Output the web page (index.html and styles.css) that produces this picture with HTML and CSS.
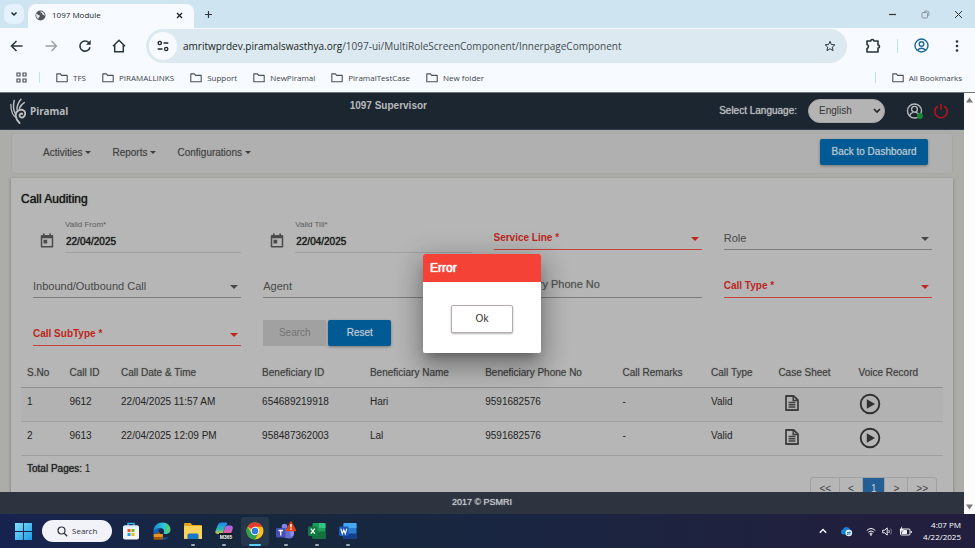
FILE: index.html
```html
<!DOCTYPE html>
<html lang="en">
<head>
<meta charset="utf-8">
<title>1097 Module</title>
<link rel="stylesheet" href="styles.css">
</head>
<body>
<svg class="defs" aria-hidden="true">
  <symbol id="folder" viewBox="0 0 12 10"><path d="M.8 1.8v6.9h10.4V2.4H5.6L4.4.9H.8z" fill="none" stroke="#4a5258" stroke-width="1.1" stroke-linejoin="round"/></symbol>
  <symbol id="calendar" viewBox="0 0 14 15"><path d="M1.5 3h11v10.7h-11z" fill="none" stroke="#4b4b4b" stroke-width="1.5" stroke-linejoin="round"/><path d="M1 2.3h12v2.9H1zM3 .4h1.6v2.4H3zM9.4.4H11v2.4H9.4zM3.5 6.8h3.7v3.7H3.5z" fill="#4b4b4b"/></symbol>
  <symbol id="sheet" viewBox="0 0 14 16"><path d="M1 1h7.6L13 5.2V15H1z" fill="none" stroke="#3f3f3f" stroke-width="1.8" stroke-linejoin="round"/><path d="M8.2 1v4.6H13M3.6 7.6h6.8M3.6 9.8h6.8M3.6 12h6.8" fill="none" stroke="#3f3f3f" stroke-width="1.5"/></symbol>
  <symbol id="play" viewBox="0 0 22 22"><circle cx="11" cy="11" r="9.3" fill="none" stroke="#303030" stroke-width="1.9"/><path d="M7.8 6.3v9.4l8.2-4.7z" fill="#303030"/></symbol>
</svg>

<header class="browser">
  <div class="tabs">
    <button class="tab-menu" aria-label="Search tabs"><svg width="8" height="6" viewBox="0 0 8 6"><path d="M1.5 1.5 4 4l2.5-2.5" fill="none" stroke="#1f2a30" stroke-width="1.5"/></svg></button>
    <div class="tab">
      <svg width="11" height="11" viewBox="0 0 11 11"><circle cx="5.500" cy="5.500" r="5" fill="#4f565b"/><path d="M1.200 3.500c1.500.300 1.700 1.600 3 1.800 1.200.200.800 1.400 0 1.600-.900.400-.400 1.600-1 2C1.400 8 .800 5.500 1.200 3.500zM5.500 1.300c-.300 1 .200 1.500 1.200 1.500.700.700 0 1.500 1.300 1.900 1.300.100 1 1.200 1.700 1.200C9.900 3.500 8.100 1.500 5.500 1.300z" fill="#e6eaed"/></svg>
      <span class="tab-title">1097 Module</span>
      <button class="bare" aria-label="Close tab"><svg width="7" height="7" viewBox="0 0 7 7"><path d="m1 1 5 5m0-5L1 6" stroke="#222" stroke-width="1.3"/></svg></button>
    </div>
    <button class="bare new-tab" aria-label="New tab"><svg width="9" height="9" viewBox="0 0 9 9"><path d="M4.500 1v7M1 4.500h7" stroke="#30383d" stroke-width="1.200"/></svg></button>
    <div class="window-buttons">
      <button class="bare" aria-label="Minimize"><svg width="9" height="9" viewBox="0 0 9 9"><path d="M1 4.500h7" stroke="#333" stroke-width="1.200"/></svg></button>
      <button class="bare" aria-label="Restore"><svg width="9" height="9" viewBox="0 0 9 9"><rect x="1" y="2.500" width="5.500" height="5.500" rx="1" fill="none" stroke="#8b979e"/><path d="M3 1.200h3.500q1.400 0 1.400 1.400V6" fill="none" stroke="#8b979e"/></svg></button>
      <button class="bare" aria-label="Close"><svg width="9" height="9" viewBox="0 0 9 9"><path d="m1 1 7 7m0-7L1 8" stroke="#333"/></svg></button>
    </div>
  </div>

  <div class="toolbar">
    <div class="nav-buttons">
      <button class="bare" aria-label="Back"><svg width="14" height="14" viewBox="0 0 14 14"><path d="M12.500 7h-11M6.500 2l-5 5 5 5" fill="none" stroke="#2a363d" stroke-width="1.600"/></svg></button>
      <button class="bare" aria-label="Forward"><svg width="14" height="14" viewBox="0 0 14 14"><path d="M1.500 7h11M7.500 2l5 5-5 5" fill="none" stroke="#9a9fa3" stroke-width="1.400"/></svg></button>
      <button class="bare" aria-label="Reload"><svg width="14" height="14" viewBox="0 0 14 14"><path d="M12 8.200A5.100 5.100 0 1 1 10.700 3.500L12 4.800" fill="none" stroke="#2a363d" stroke-width="1.600"/><path d="M12.700 1v4.700H8z" fill="#2a363d"/></svg></button>
      <button class="bare" aria-label="Home"><svg width="14" height="14" viewBox="0 0 14 14"><path d="M1 7.300 7 1.300l6 6M2.700 6v6.700h8.600V6" fill="none" stroke="#2a363d" stroke-width="1.500"/></svg></button>
    </div>
    <div class="omnibox">
      <button class="site-info" aria-label="Site information"><svg width="12" height="12" viewBox="0 0 12 12"><g fill="none" stroke="#22292e" stroke-width="1.400"><circle cx="2.800" cy="3" r="1.600"/><path d="M6.500 3h4.800M.700 9h4.800"/><circle cx="9.200" cy="9" r="1.600"/></g></svg></button>
      <div class="url" role="textbox" aria-label="Address"><b>amritwprdev.piramalswasthya.org</b>/1097-ui/MultiRoleScreenComponent/InnerpageComponent</div>
      <button class="bare" aria-label="Bookmark this page"><svg width="12" height="12" viewBox="0 0 12 12"><path d="m6 1.300 1.400 3.200 3.500.300L8.300 7.100l.800 3.500L6 8.800l-3.100 1.800.800-3.500L1.100 4.800l3.500-.300z" fill="none" stroke="#30383d"/></svg></button>
    </div>
    <button class="bare ext" aria-label="Extensions"><svg width="16" height="16" viewBox="0 0 16 16"><path d="M2 3h3.800a1.500 1.500 0 0 1 3 0h4.200v4a1.500 1.500 0 0 1 0 3v4H2v-3.500a2.100 2.100 0 0 0 0-4z" fill="none" stroke="#26343c" stroke-width="1.600" stroke-linejoin="round"/></svg></button>
    <span class="rule"></span>
    <button class="bare profile" aria-label="Profile"><svg width="15" height="15" viewBox="0 0 15 15"><g fill="none" stroke="#1f6a94" stroke-width="1.400"><circle cx="7.500" cy="7.500" r="6.500"/><circle cx="7.500" cy="6" r="2.300"/><path d="M3.300 12.200q4.200-3.800 8.400 0"/></g></svg></button>
    <button class="bare more" aria-label="Menu"><svg width="4" height="14" viewBox="0 0 4 14"><g fill="#26343c"><circle cx="2" cy="2.500" r="1.300"/><circle cx="2" cy="7" r="1.300"/><circle cx="2" cy="11.500" r="1.300"/></g></svg></button>
  </div>

  <nav class="bookmarks">
    <button class="bare" aria-label="Apps"><svg width="11" height="11" viewBox="0 0 11 11"><g fill="none" stroke="#4a5258" stroke-width="1.200"><path d="M1 1h3v3H1zM7 1h3v3H7zM1 7h3v3H1zM7 7h3v3H7z"/></g></svg></button>
    <span class="rule"></span>
    <a href="#"><svg width="12" height="10"><use href="#folder"/></svg>TFS</a>
    <a href="#"><svg width="12" height="10"><use href="#folder"/></svg>PIRAMALLINKS</a>
    <a href="#"><svg width="12" height="10"><use href="#folder"/></svg>Support</a>
    <a href="#"><svg width="12" height="10"><use href="#folder"/></svg>NewPiramal</a>
    <a href="#"><svg width="12" height="10"><use href="#folder"/></svg>PiramalTestCase</a>
    <a href="#"><svg width="12" height="10"><use href="#folder"/></svg>New folder</a>
    <span class="rule push"></span>
    <a href="#"><svg width="12" height="10"><use href="#folder"/></svg>All Bookmarks</a>
  </nav>
</header>

<div class="viewport">
  <div class="app">
    <header class="app-bar">
      <div class="brand">
        <svg width="16" height="26" viewBox="0 0 16 26"><g fill="none" stroke="#bcbec0" stroke-linecap="round"><path d="M9.500 25C5 20.500 4 14.500 9 12.200c3.500-1.400 6.200.500 6.200 3.200 0 3-3 5.300-5 3.500-1.600-1.600.500-4 2-3" stroke-width="1.900"/><path d="M6.500 20C2 17.500.900 13 .800 6.500" stroke-width="1.300"/><path d="M5.500 16C3.200 12 3 7.500 4.200 2.500M7 11.500C7 8 8.500 4 11 1.200M9.500 10.300c1-2.600 2.500-4.400 4.800-5.700" stroke-width="1.500"/></g></svg>
        <span>Piramal</span>
      </div>
      <h1>1097 Supervisor</h1>
      <label for="lang">Select Language:</label>
      <select id="lang" class="lang"><option>English</option></select>
      <button class="bare user" aria-label="User profile"><svg width="18" height="17" viewBox="0 0 18 17"><g fill="none" stroke="#b5b8ba" stroke-width="1.400"><circle cx="8.500" cy="8" r="7"/><circle cx="8.500" cy="6.300" r="2.900"/><path d="M3.500 13q1-3 3.500-3.600M13.500 13q-1-3-3.500-3.600"/></g><circle cx="14" cy="13" r="2.900" fill="#17872f"/></svg></button>
      <button class="bare" aria-label="Log out"><svg width="14" height="16" viewBox="0 0 14 16"><path d="M3.800 3.200a6.200 6.200 0 1 0 6.400 0M7 .800v6" fill="none" stroke="#b3151b" stroke-width="1.600"/></svg></button>
    </header>

    <main>
      <nav class="menu">
        <button class="drop">Activities</button>
        <button class="drop">Reports</button>
        <button class="drop">Configurations</button>
        <button class="primary back">Back to Dashboard</button>
      </nav>

      <section class="card">
        <h2>Call Auditing</h2>
        <form class="filters">
          <div class="date">
            <svg width="14" height="15"><use href="#calendar"/></svg>
            <div><label for="from">Valid From*</label><input id="from" value="22/04/2025"></div>
          </div>
          <div class="date">
            <svg width="14" height="15"><use href="#calendar"/></svg>
            <div><label for="till">Valid Till*</label><input id="till" value="22/04/2025"></div>
          </div>
          <div class="field required"><select aria-label="Service Line"><option>Service Line *</option></select></div>
          <div class="field"><select aria-label="Role"><option>Role</option></select></div>
          <div class="field"><select aria-label="Inbound/Outbound Call"><option>Inbound/Outbound Call</option></select></div>
          <div class="field"><select aria-label="Agent"><option>Agent</option></select></div>
          <div class="text"><input aria-label="Beneficiary Phone No" placeholder="Beneficiary Phone No"></div>
          <div class="field required"><select aria-label="Call Type"><option>Call Type *</option></select></div>
          <div class="field required"><select aria-label="Call SubType"><option>Call SubType *</option></select></div>
          <div class="actions">
            <button type="button" class="muted" disabled>Search</button>
            <button type="button" class="primary">Reset</button>
          </div>
        </form>

        <table>
          <colgroup><col class="c1"><col class="c2"><col class="c3"><col class="c4"><col class="c5"><col class="c6"><col class="c7"><col class="c8"><col class="c9"><col></colgroup>
          <thead>
            <tr><th>S.No</th><th>Call ID</th><th>Call Date &amp; Time</th><th>Beneficiary ID</th><th>Beneficiary Name</th><th>Beneficiary Phone No</th><th>Call Remarks</th><th>Call Type</th><th>Case Sheet</th><th>Voice Record</th></tr>
          </thead>
          <tbody>
            <tr><td>1</td><td>9612</td><td>22/04/2025 11:57 AM</td><td>654689219918</td><td>Hari</td><td>9591682576</td><td>-</td><td>Valid</td>
              <td><button class="bare sheet" aria-label="Case sheet"><svg width="14" height="16"><use href="#sheet"/></svg></button></td>
              <td><button class="bare" aria-label="Play"><svg width="22" height="22"><use href="#play"/></svg></button></td></tr>
            <tr><td>2</td><td>9613</td><td>22/04/2025 12:09 PM</td><td>958487362003</td><td>Lal</td><td>9591682576</td><td>-</td><td>Valid</td>
              <td><button class="bare sheet" aria-label="Case sheet"><svg width="14" height="16"><use href="#sheet"/></svg></button></td>
              <td><button class="bare" aria-label="Play"><svg width="22" height="22"><use href="#play"/></svg></button></td></tr>
          </tbody>
        </table>
        <p class="total"><span>Total Pages:</span> 1</p>
        <nav class="pager" aria-label="Pages">
          <a href="#">&lt;&lt;</a><a href="#">&lt;</a><a href="#" class="current">1</a><a href="#">&gt;</a><a href="#">&gt;&gt;</a>
        </nav>
      </section>
    </main>
    <footer class="app-footer">2017 © PSMRI</footer>

    <div class="modal-layer">
      <div class="modal" role="alertdialog" aria-labelledby="modal-title">
        <h3 id="modal-title">Error</h3>
        <div class="modal-body"><button>Ok</button></div>
      </div>
    </div>
  </div>
  <div class="scrollbar" aria-hidden="true">
    <svg width="7" height="6" viewBox="0 0 7 6"><path d="M3.500.500 7 5.500H0z" fill="#7c7c7c"/></svg>
    <svg width="7" height="6" viewBox="0 0 7 6"><path d="M3.500 5.500 7 .500H0z" fill="#7c7c7c"/></svg>
  </div>
</div>

<footer class="taskbar">
  <div class="apps">
    <button class="bare start" aria-label="Start"><svg width="17" height="17" viewBox="0 0 17 17"><defs><linearGradient id="win" x2="1" y2="1"><stop stop-color="#7fe0fb"/><stop offset="1" stop-color="#1c9ae6"/></linearGradient></defs><path d="M0 0h8v8H0zM9 0h8v8H9zM0 9h8v8H0zM9 9h8v8H9z" fill="url(#win)"/></svg></button>
    <button class="search"><svg width="11" height="11" viewBox="0 0 11 11"><circle cx="4.500" cy="4.500" r="3.500" fill="none" stroke="#2b3038" stroke-width="1.200"/><path d="m7.200 7.200 3 3" stroke="#2b3038" stroke-width="1.300"/></svg>Search</button>
    <button class="app-icon" aria-label="Store"><svg width="18" height="18" viewBox="0 0 18 18"><path d="M6 4V1.500h6V4" fill="none" stroke="#35b4ec" stroke-width="1.400"/><rect x="1" y="3.500" width="16" height="14" rx="2" fill="#f2f5f7"/><path d="M1 5.500q0-2 2-2h12q2 0 2 2z" fill="#d9eef8"/><path d="M5.500 7h3v3h-3z" fill="#f04e23"/><path d="M9.500 7h3v3h-3z" fill="#74b82a"/><path d="M5.500 11h3v3h-3z" fill="#1c9ee8"/><path d="M9.500 11h3v3h-3z" fill="#f7b617"/></svg></button>
    <button class="app-icon" aria-label="Edge"><svg width="18" height="18" viewBox="0 0 18 18"><defs><linearGradient id="edge" x2="1"><stop stop-color="#1687d8"/><stop offset=".6" stop-color="#2fc4d8"/><stop offset="1" stop-color="#5bd15a"/></linearGradient></defs><path d="M.500 9.500C.500 3.500 5 .500 9.500.500c5 0 8 3.500 8 7 0 3-2.300 4.500-4.700 4.500-1.800 0-2.500-.700-2-1.600 1-2-.500-4.200-3.300-4.200C4 6.200 1.300 8 .500 10.500z" fill="url(#edge)"/><path d="M.500 10C1.500 7 4.500 6 7 6.500c-2 1.500-2 5 .500 7.500 2.500 2.300 6 2.200 8.500.500-2 3-6 3.500-9 2.500C3 16 .500 13.500.500 10z" fill="#1262b8"/><path d="M3.500 10.500h3.600V12h2.700v5.800H.700V12h2.800z" fill="#9b5710"/><path d="M.700 12h9.100v3H.700z" fill="#e79327"/></svg></button>
    <button class="app-icon running" aria-label="File Explorer"><svg width="18" height="18" viewBox="0 0 18 18"><path d="M0 2q0-1 1-1h5.500l2 2H17q1 0 1 1v12q0 1-1 1H1q-1 0-1-1z" fill="#e5a51b"/><path d="M0 5q0-1 1-1h16q1 0 1 1v11q0 1-1 1H1q-1 0-1-1z" fill="#fbd35b"/><path d="M3.500 17v-4q0-1.500 1.500-1.500h8q1.500 0 1.500 1.500v4z" fill="#1878c9"/></svg></button>
    <button class="app-icon running" aria-label="Microsoft 365"><svg width="18" height="18" viewBox="0 0 18 18"><defs><linearGradient id="co1" x1="0" y1="0" x2="0" y2="1"><stop stop-color="#1e87ec"/><stop offset=".6" stop-color="#27b9b2"/><stop offset="1" stop-color="#e9c62a"/></linearGradient><linearGradient id="co2" x1="0" y1="0" x2="0" y2="1"><stop stop-color="#a267ee"/><stop offset="1" stop-color="#ee5a83"/></linearGradient></defs><path d="M6 .500h5q1.500 0 1.200 1.500L10 5 7.500 12H3Q-.500 12 .500 9L3 2.500Q3.700.500 6 .500z" fill="url(#co1)"/><path d="M12 3.500h3.500Q18.500 3.500 17.700 7l-1.600 4.500Q15.500 13 13 13H7.500L10 5z" fill="url(#co2)"/><path d="M4 11h14v6.500H4z" fill="#101820"/><text x="11" y="16.500" text-anchor="middle" class="tiny-mark">M365</text></svg></button>
    <button class="app-icon running active" aria-label="Chrome"><svg width="18" height="18" viewBox="0 0 18 18"><circle cx="9" cy="9" r="8.500" fill="#fbc116"/><path d="M9 9 1.600 4.800A8.500 8.500 0 0 1 16.400 4.800H9z" fill="#e33b2e"/><path d="M1.600 4.800A8.500 8.500 0 0 0 9 17.500L12.700 11 9 13 5.300 11z" fill="#29a352"/><circle cx="9" cy="9" r="4.200" fill="#fff"/><circle cx="9" cy="9" r="3.300" fill="#2f7de9"/></svg></button>
    <button class="app-icon running" aria-label="Teams"><svg width="20" height="20" viewBox="0 0 20 20"><circle cx="8.500" cy="5.500" r="2.800" fill="#7b83eb"/><path d="M6 8h11.500v5.500q0 4-4 4-5 0-7.500-3z" fill="#6670d4"/><path d="M13.500 8H18v4.500q0 3-3 3z" fill="#8b92ee"/><rect y="7" width="9.500" height="9.500" rx="1" fill="#4550b5"/><path d="M2.500 9.500H7M4.750 9.500v5" stroke="#fff" stroke-width="1.300"/><path d="M15 1 19.500 9.500h-9z" fill="#e2410e" stroke="#e2410e" stroke-width="1.500" stroke-linejoin="round"/><path d="M15 3v3.500M15 7.500V9" stroke="#fff" stroke-width="1.400"/></svg></button>
    <button class="app-icon running" aria-label="Excel"><svg width="18" height="18" viewBox="0 0 18 18"><rect x="4.500" y="1" width="13" height="16" rx="1" fill="#1f9c5c"/><path d="M11 1h5.500q1 0 1 1v4H11z" fill="#32c481"/><path d="M4.500 9.500h13V16q0 1-1 1h-11q-1 0-1-1z" fill="#15703f"/><rect y="4.500" width="9.500" height="9.500" rx="1" fill="#0f7a41"/><path d="m2.800 6.700 4 5m0-5-4 5" stroke="#fff" stroke-width="1.300"/></svg></button>
    <button class="app-icon running" aria-label="Word"><svg width="18" height="18" viewBox="0 0 18 18"><rect x="4.500" y="1" width="13" height="16" rx="1" fill="#2b7cd3"/><path d="M4.500 6V2q0-1 1-1h11q1 0 1 1v4z" fill="#46a8f0"/><path d="M4.500 11.500h13V16q0 1-1 1h-11q-1 0-1-1z" fill="#143f8f"/><rect y="4.500" width="9.500" height="9.500" rx="1" fill="#1d57b7"/><path d="m1.800 6.700 1.500 5 1.500-4 1.500 4 1.500-5" fill="none" stroke="#fff" stroke-width="1.100"/></svg></button>
  </div>
  <div class="tray">
    <svg class="chevron" width="8" height="6" viewBox="0 0 8 6"><path d="m.800 4.800 3.200-3.300 3.200 3.300" fill="none" stroke="#fff" stroke-width="1.300"/></svg>
    <svg class="cloud" width="13" height="11" viewBox="0 0 13 11"><path d="M3 8.500a2.700 2.700 0 0 1 0-5.200 3.800 3.800 0 0 1 7 .200 2.600 2.600 0 0 1 0 5z" fill="#1583dc"/><circle cx="8.800" cy="7" r="3.300" fill="#e9f4fc"/><path d="M7 6.500h3.500L9.600 5.400M10.500 8H7l.900 1" fill="none" stroke="#1470bd" stroke-width=".9"/></svg>
    <svg width="10" height="9" viewBox="0 0 10 9"><g fill="none" stroke="#f2f2f5"><path d="M.700 3.500q4.300-4 8.600 0M2.200 5.200q2.800-2.500 5.600 0M3.600 6.700q1.400-1.200 2.800 0"/></g><circle cx="5" cy="7.800" r=".9" fill="#fff"/></svg>
    <svg width="11" height="9" viewBox="0 0 11 9"><path d="M.700 3.200h1.800L5.200.900v7.200L2.500 5.800H.700z" fill="none" stroke="#f2f2f5"/><path d="M6.800 3q1 1.500 0 3" fill="none" stroke="#f2f2f5"/><path d="M8.600 1.500q2 3 0 6" fill="none" stroke="#777590"/></svg>
    <svg width="13" height="11" viewBox="0 0 13 11"><rect x="1.500" y="3" width="9.500" height="6" rx="1" fill="none" stroke="#f2f2f5"/><path d="M12.300 5v2M4.500 4.500h3v3H3z" stroke="#f2f2f5" fill="#f2f2f5"/><path d="M3.200 0 .500 4.200h2L1.800 7 4.800 3H2.700z" fill="#fff"/></svg>
    <div class="clock"><div>4:07 PM</div><div>4/22/2025</div></div>
  </div>
</footer>
</body>
</html>
```
FILE: styles.css
```css
* { box-sizing: border-box; }
body {
  margin: 0;
  height: 100vh;
  display: flex;
  flex-direction: column;
  overflow: hidden;
  font: 10px/14px "Liberation Sans", Arial, sans-serif;
  background: #b6b6b6;
}
button, input, select { font: inherit; color: inherit; margin: 0; }
svg { display: block; flex: none; }
h1, h2, h3, p { margin: 0; }
a { color: inherit; text-decoration: none; }
.defs { position: absolute; width: 0; height: 0; }
.bare { border: 0; padding: 0; background: none; display: block; }

/* Browser frame */
.browser { flex: none; background: #f7faff; font-family: "Open Sans", "Noto Sans", sans-serif; color: #3c4348; border-bottom: 1px solid #6f767c; }
.tabs { display: flex; align-items: center; height: 28px; background: #cfe4f1; padding: 0 12px 0 4px; }
.tab-menu { width: 20px; height: 20px; border: 0; border-radius: 7px; background: #e3f2fd; display: grid; place-items: center; padding: 0; }
.tab { align-self: flex-end; display: flex; align-items: center; gap: 6px; width: 166px; height: 24px; margin-left: 4px; padding: 0 11px 2px 7px; border-radius: 8px 8px 0 0; background: #f7faff; }
.tab-title { flex: 1; font-size: 8px; color: #20282d; }
.new-tab { margin-left: 10px; }
.window-buttons { display: flex; gap: 24px; margin-left: auto; }
.toolbar { display: flex; align-items: center; height: 35px; padding: 0 16px 0 10px; background: #f7faff; border-top-right-radius: 8px; }
.nav-buttons { display: flex; gap: 20px; margin-right: 20px; }
.omnibox { flex: 1; display: flex; align-items: center; height: 34px; border-radius: 17px; background: #dde9f0; padding: 0 11px 0 3px; }
.site-info { width: 28px; height: 28px; border: 0; border-radius: 14px; background: #f7faff; display: grid; place-items: center; padding: 0; }
.url { flex: 1; margin-left: 6px; font-size: 10px; white-space: nowrap; color: #434b50; }
.url b { font-weight: 400; color: #161d21; }
.ext { margin-left: 18px; }
.rule { width: 1px; height: 14px; background: #b9e3f8; }
.toolbar .rule { margin: 0 16px; }
.more { margin-left: 26px; }
.bookmarks { display: flex; align-items: center; height: 29px; padding: 0 13px 0 16px; font-size: 8px; background: #f7faff; }
.bookmarks a { display: flex; align-items: center; gap: 5px; margin-left: 16px; white-space: nowrap; }
.bookmarks .rule { margin-left: 12px; height: 11px; }
.bookmarks .rule.push { margin-left: auto; }

/* Application window */
.viewport { flex: 1; min-height: 0; display: flex; }
.app { position: relative; flex: 1; min-width: 0; display: flex; flex-direction: column; background: #acaca9; }
.app-bar { flex: none; display: flex; align-items: center; height: 37px; padding: 0 16px 0 10px; background: #1b2631; border-bottom: 1px solid #2b3d4f; color: #b8babc; }
.brand { display: flex; align-items: center; gap: 4px; width: 36%; font: 700 10px/14px "Noto Sans", sans-serif; }
.app-bar h1 { flex: 1; align-self: flex-start; padding: 6px 0 0 2px; font-size: 10px; line-height: 14px; }
.app-bar label { text-shadow: 0 0 1px currentColor; }
.lang { appearance: none; width: 77px; height: 24px; margin: 0 21px 0 11px; padding: 0 10px; border: 1px solid #a5a5a5; border-radius: 12px; color: #363636; background: #b4b4b4 url("data:image/svg+xml,%3Csvg xmlns='http://www.w3.org/2000/svg' width='8' height='6'%3E%3Cpath d='M1 1l3 3 3-3' fill='none' stroke='%23222' stroke-width='1.6'/%3E%3C/svg%3E") no-repeat right 3px center; }
.user { margin-right: 10px; }
.app main { flex: 1; min-height: 0; overflow: hidden; padding: 3px 11px 0; }
.menu { display: flex; align-items: center; gap: 21px; height: 41px; padding: 0 24px 4px 31px; border: 1px solid #a7a7a7; border-radius: 3px; background: #b0b0b0; color: #404040; }
.drop { display: flex; align-items: center; gap: 3px; border: 0; padding: 2px 0 0; background: none; text-shadow: 0 0 1px #888; }
.drop::after { content: ""; border: 3px solid transparent; border-top-color: #3d3d3d; border-bottom: 0; }
.primary { height: 26px; border: 0; border-radius: 2px; background: #015a94; color: #bcc9d2; box-shadow: 0 1px 3px rgba(0, 0, 0, .35); text-shadow: 0 0 1px #7d9fb5; }
.back { margin-left: auto; width: 108px; padding: 0; }
.card { margin-top: 4px; padding: 14px 10px 0; background: #b6b6b6; box-shadow: 0 1px 3px rgba(0, 0, 0, .3); }
.card h2 { font-size: 12px; line-height: 14px; font-weight: 400; color: #181818; text-shadow: 0 0 1px #181818; }
.filters { display: grid; grid-template-columns: repeat(4, 1fr); grid-auto-rows: 38px; gap: 10px 22px; align-items: end; padding: 6px 11px 0 12px; color: #484848; font-size: 11px; }
.date { display: flex; gap: 11px; padding-left: 7px; height: 36px; margin-bottom: -3px; }
.date svg { margin-top: 16px; }
.date div { flex: 1; min-width: 0; border-bottom: 1px solid #a0a0a0; }
.date label { display: block; padding-top: 1px; font-size: 8px; line-height: 14px; color: #5a5a5a; }
.date input { display: block; width: 100%; height: 18px; border: 0; padding: 0 1px; background: none; font-size: 10px; color: #181818; text-shadow: 0 0 1px #181818; }
.field { position: relative; height: 24px; border-bottom: 1px solid #7d7d7d; text-shadow: 0 0 1px #888; }
.field::after { content: ""; position: absolute; right: 3px; top: 11px; border: 4px solid transparent; border-top-color: currentColor; border-bottom: 0; }
.field select { appearance: none; width: 100%; height: 23px; border: 0; padding: 0; background: none; }
.field.required { color: #bd261e; border-bottom-color: #c5453d; text-shadow: none; }
.required select { font-size: 10px; font-weight: 700; }
.text { height: 24px; border-bottom: 1px solid #7d7d7d; }
.text input { display: block; width: 100%; height: 20px; padding: 0; border: 0; background: none; text-shadow: 0 0 1px #888; }
.text input::placeholder { color: #505050; opacity: 1; }
.actions { display: flex; gap: 2px; }
.actions button { width: 63px; height: 26px; padding: 0; font-size: 10px; }
.muted { border: 0; background: #a1a1a1; color: #737373; }

table { width: 100%; margin-top: 13px; border-collapse: collapse; table-layout: fixed; color: #242424; }
.c1 { width: 4.6%; }
.c2 { width: 5.6%; }
.c3 { width: 15.3%; }
.c4 { width: 11.7%; }
.c5 { width: 12.5%; }
.c6 { width: 14.9%; }
.c7 { width: 9.6%; }
.c8 { width: 7.3%; }
.c9 { width: 8.7%; }
th, td { padding: 7px 0 0 6px; text-align: left; vertical-align: top; white-space: nowrap; }
th { height: 28px; font-weight: 400; color: #404040; text-shadow: 0 0 1px #777; border-bottom: 1px solid #8e8e8e; }
td { height: 34px; border-bottom: 1px solid #a0a0a0; }
tbody tr:first-child { background: #b2b2b2; }
td .bare { margin-top: -2px; }
td .sheet { margin: 0 0 0 7px; }
.total { padding: 6px 6px 0; color: #242424; }
.total span { text-shadow: 0 0 1px #242424; }
.pager { display: flex; width: max-content; margin: 1px 6px 0 auto; border: 1px solid #a1a1a1; border-radius: 3px; color: #404040; }
.pager a { padding: 4px 8px; border-left: 1px solid #a1a1a1; }
.pager a:first-child { border-left: 0; }
.pager .current { background: #235f94; color: #c5d0d9; }
.app-footer { position: relative; flex: none; height: 22px; line-height: 21px; text-align: center; font-size: 9px; background: #2d3440; color: #c4c7ca; text-shadow: 0 0 1px #c4c7ca; }
.scrollbar { flex: none; width: 11px; padding: 4px 2px; display: flex; flex-direction: column; justify-content: space-between; background: #fcfcfc; }

/* Error dialog */
.modal-layer { position: absolute; inset: 0; display: grid; place-items: center; }
.modal { width: 118px; border-radius: 2px; background: #fff; box-shadow: 0 7px 10px -5px rgba(0, 0, 0, .3), 0 14px 24px 2px rgba(0, 0, 0, .2), 0 6px 28px 5px rgba(0, 0, 0, .16); }
.modal h3 { padding: 7px; border-radius: 2px 2px 0 0; background: #f44336; color: #fff; font-size: 12px; line-height: 14px; font-weight: 400; text-shadow: 0 0 1px #fff, 0 0 1px #fff; }
.modal-body { padding: 23px 28px 20px; }
.modal-body button { width: 100%; height: 28px; border: 1px solid #b5adad; border-radius: 2px; background: #fff; color: #303030; font-size: 10px; box-shadow: 0 1px 2px rgba(0, 0, 0, .3); }

/* Taskbar */
.taskbar { flex: none; display: flex; justify-content: space-between; height: 34px; background: linear-gradient(90deg, #17234f, #16283d 26%, #192641 50%, #211f3d 90%); color: #fff; font-family: "Open Sans", "Noto Sans", sans-serif; }
.apps { display: flex; align-items: center; padding-left: 15px; }
.search { display: flex; align-items: center; gap: 4px; width: 70px; height: 22px; margin: 0 5px 0 10px; padding: 0 15px; border: 0; border-radius: 11px; background: #f1f3f8; color: #2b3038; font-size: 8px; }
.app-icon { position: relative; display: grid; place-items: center; width: 28px; height: 29px; margin-right: 3px; padding: 0; border: 0; border-radius: 3px; background: none; }
.app-icon.running::after { content: ""; position: absolute; bottom: 0; left: 50%; width: 4px; height: 2px; margin-left: -2px; border-radius: 1px; background: #a4aab2; }
.app-icon.active { background: #26374c; }
.app-icon.active::after { width: 12px; margin-left: -6px; background: #5ccbfa; }
.tiny-mark { font: 700 5px "Liberation Sans", sans-serif; fill: #fff; }
.tray { display: flex; align-items: center; gap: 6px; padding-right: 14px; font-size: 8px; }
.chevron, .cloud { margin-right: 7px; }
.clock { margin-left: 5px; line-height: 12px; text-align: right; }
```
